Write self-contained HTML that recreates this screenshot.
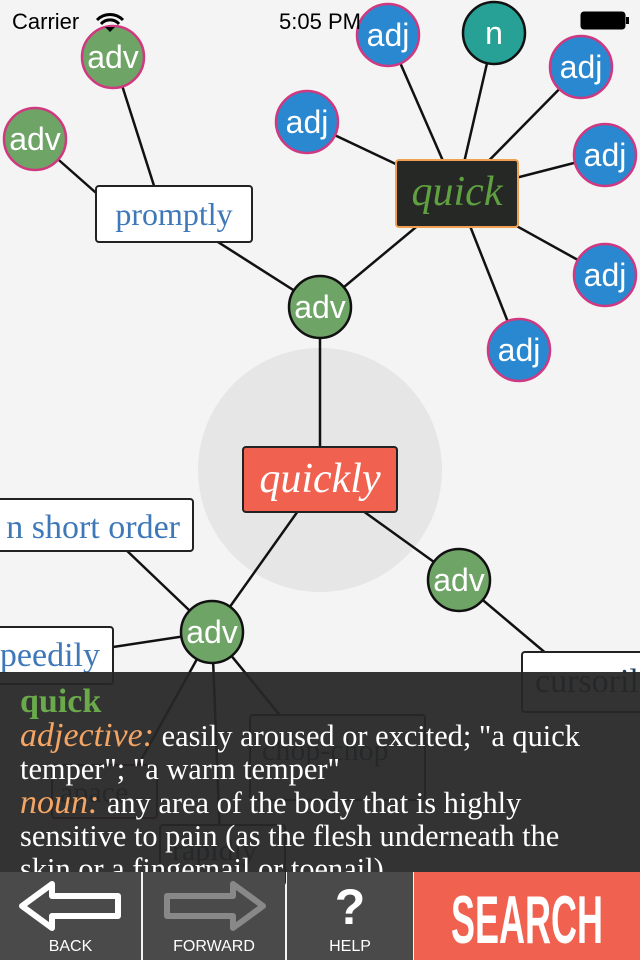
<!DOCTYPE html>
<html><head><meta charset="utf-8"><style>
body{margin:0;width:640px;height:960px;overflow:hidden;background:#f4f4f4;position:relative;font-family:"Liberation Sans",sans-serif}
svg{position:absolute;left:0;top:0}
.c text{font-family:"Liberation Sans",sans-serif;font-size:32px;fill:#fff;text-anchor:middle}
.panel{position:absolute;left:0;top:672px;width:640px;height:200px;background:rgba(38,38,38,0.94);overflow:hidden}
.panel .t{position:absolute;left:20px;top:13px;width:585px;font-family:"Liberation Serif",serif;font-size:30.4px;line-height:33px;color:#fff}
.tb{position:absolute;top:872px;height:88px;background:#4a4a4a;color:#fff;text-align:center;font-size:16px}
.lbl{position:absolute;bottom:4px;left:0;right:0}
</style></head><body>
<svg width="640" height="960">
<circle cx="320" cy="470" r="122" fill="#e6e6e6"/>
<g stroke="#111" stroke-width="2.5">
<line x1="113" y1="57" x2="163" y2="214"/><line x1="35" y1="139" x2="120" y2="214"/>
<line x1="174" y1="214" x2="320" y2="307"/><line x1="457" y1="193" x2="320" y2="307"/>
<line x1="457" y1="193" x2="307" y2="122"/><line x1="457" y1="193" x2="388" y2="35"/>
<line x1="457" y1="193" x2="494" y2="33"/><line x1="457" y1="193" x2="581" y2="67"/>
<line x1="457" y1="193" x2="605" y2="155"/><line x1="457" y1="193" x2="605" y2="275"/>
<line x1="457" y1="193" x2="519" y2="350"/>
<line x1="320" y1="307" x2="320" y2="480"/>
<line x1="320" y1="480" x2="212" y2="632"/><line x1="320" y1="480" x2="459" y2="580"/>
<line x1="459" y1="580" x2="580" y2="682"/>
<line x1="212" y1="632" x2="100" y2="525"/><line x1="212" y1="632" x2="60" y2="655"/>
<line x1="212" y1="632" x2="130" y2="780"/><line x1="212" y1="632" x2="220" y2="840"/>
<line x1="212" y1="632" x2="300" y2="740"/>
</g>
<rect x="96" y="186" width="156" height="56" rx="3" fill="#fff" stroke="#222" stroke-width="2"/>
<text x="174" y="225" font-family="Liberation Serif" font-size="32" fill="#3f78b8" text-anchor="middle">promptly</text>
<rect x="396" y="160" width="122" height="67" rx="3" fill="#262826" stroke="#f0a050" stroke-width="2"/>
<text x="457" y="205" font-family="Liberation Serif" font-style="italic" font-size="42" fill="#5fa040" text-anchor="middle">quick</text>
<rect x="-10" y="499" width="203" height="52" rx="3" fill="#fff" stroke="#222" stroke-width="2"/>
<text x="180" y="538" font-family="Liberation Serif" font-size="34" fill="#3f78b8" text-anchor="end">n short order</text>
<rect x="-10" y="627" width="123" height="57" rx="3" fill="#fff" stroke="#222" stroke-width="2"/>
<text x="100" y="666" font-family="Liberation Serif" font-size="34" fill="#3f78b8" text-anchor="end">peedily</text>
<rect x="522" y="652" width="130" height="60" rx="3" fill="#fff" stroke="#222" stroke-width="2"/>
<text x="535" y="692" font-family="Liberation Serif" font-size="34" fill="#1e3a5a">cursoril</text>
<rect x="52" y="765" width="105" height="53" rx="3" fill="#f0e0e0" stroke="#5a1020" stroke-width="2"/>
<text x="60" y="802" font-family="Liberation Serif" font-size="30" fill="#1e3a5a">apace</text>
<rect x="250" y="715" width="175" height="85" rx="3" fill="#eee" stroke="#222" stroke-width="2"/>
<text x="262" y="760" font-family="Liberation Serif" font-size="30" fill="#1e3a5a">chop-chop</text>
<rect x="160" y="825" width="125" height="60" rx="3" fill="#eee" stroke="#222" stroke-width="2"/>
<text x="172" y="860" font-family="Liberation Serif" font-size="30" fill="#1e3a5a">rapidly</text>
<rect x="243" y="447" width="154" height="65" rx="3" fill="#f0614f" stroke="#222" stroke-width="2"/>
<text x="320" y="492" font-family="Liberation Serif" font-style="italic" font-size="42" fill="#fff" text-anchor="middle">quickly</text>
<g class="c">
<g stroke="#d03880" stroke-width="2.5" fill="#6ea466"><circle cx="113" cy="57" r="31"/><circle cx="35" cy="139" r="31"/></g>
<g stroke="#111" stroke-width="2.5" fill="#6ea466"><circle cx="320" cy="307" r="31"/><circle cx="459" cy="580" r="31"/><circle cx="212" cy="632" r="31"/></g>
<g stroke="#d03880" stroke-width="2.5" fill="#2a88d0"><circle cx="307" cy="122" r="31"/><circle cx="388" cy="35" r="31"/><circle cx="581" cy="67" r="31"/><circle cx="605" cy="155" r="31"/><circle cx="605" cy="275" r="31"/><circle cx="519" cy="350" r="31"/></g>
<circle cx="494" cy="33" r="31" fill="#27a096" stroke="#111" stroke-width="2.5"/>
<text x="113" y="68">adv</text><text x="35" y="150">adv</text><text x="320" y="318">adv</text><text x="459" y="591">adv</text><text x="212" y="643">adv</text>
<text x="307" y="133">adj</text><text x="388" y="46">adj</text><text x="581" y="78">adj</text><text x="605" y="166">adj</text><text x="605" y="286">adj</text><text x="519" y="361">adj</text><text x="494" y="44">n</text>
</g>
<text x="12" y="29" font-family="Liberation Sans" font-size="22" fill="#000">Carrier</text>
<path d="M97 20 a18 18 0 0 1 26 0 M101 24 a12 12 0 0 1 18 0" stroke="#000" stroke-width="3" fill="none"/><path d="M105 27 l5 5 l5 -5 z" fill="#000"/>
<text x="320" y="29" font-family="Liberation Sans" font-size="22" fill="#000" text-anchor="middle">5:05 PM</text>
<rect x="581" y="12" width="44" height="17" rx="3" fill="#000" stroke="#000"/><rect x="626" y="17" width="3" height="7" fill="#000"/>
</svg>
<div class="panel"><div class="t"><span style="color:#6aaa4a;font-weight:bold;font-size:34px">quick</span><br><span style="color:#f4a564;font-style:italic;font-size:34px">adjective:</span> easily aroused or excited; "a quick temper"; "a warm temper"<br><span style="color:#f4a564;font-style:italic;font-size:34px">noun:</span> any area of the body that is highly sensitive to pain (as the flesh underneath the skin or a fingernail or toenail)</div></div>
<div class="tb" style="left:0;width:141px"><svg width="141" height="70" style="position:relative"><path d="M22 34 L52 12 L52 24 L118 24 L118 44 L52 44 L52 56 Z" fill="none" stroke="#fff" stroke-width="6" stroke-linejoin="round"/></svg><div class="lbl">BACK</div></div>
<div class="tb" style="left:143px;width:142px"><svg width="142" height="70" style="position:relative"><path d="M120 34 L90 12 L90 24 L24 24 L24 44 L90 44 L90 56 Z" fill="none" stroke="#888" stroke-width="6" stroke-linejoin="round"/></svg><div class="lbl">FORWARD</div></div>
<div class="tb" style="left:287px;width:126px"><div style="font-size:50px;font-weight:bold;margin-top:6px">?</div><div class="lbl">HELP</div></div>
<div class="tb" style="left:414px;width:226px;background:#f0614f;overflow:hidden"><svg width="226" height="88" style="position:relative"><text x="113" y="71" font-family="Liberation Sans" font-weight="bold" font-size="68" fill="#fff" text-anchor="middle" textLength="152" lengthAdjust="spacingAndGlyphs">SEARCH</text></svg></div>
</body></html>
